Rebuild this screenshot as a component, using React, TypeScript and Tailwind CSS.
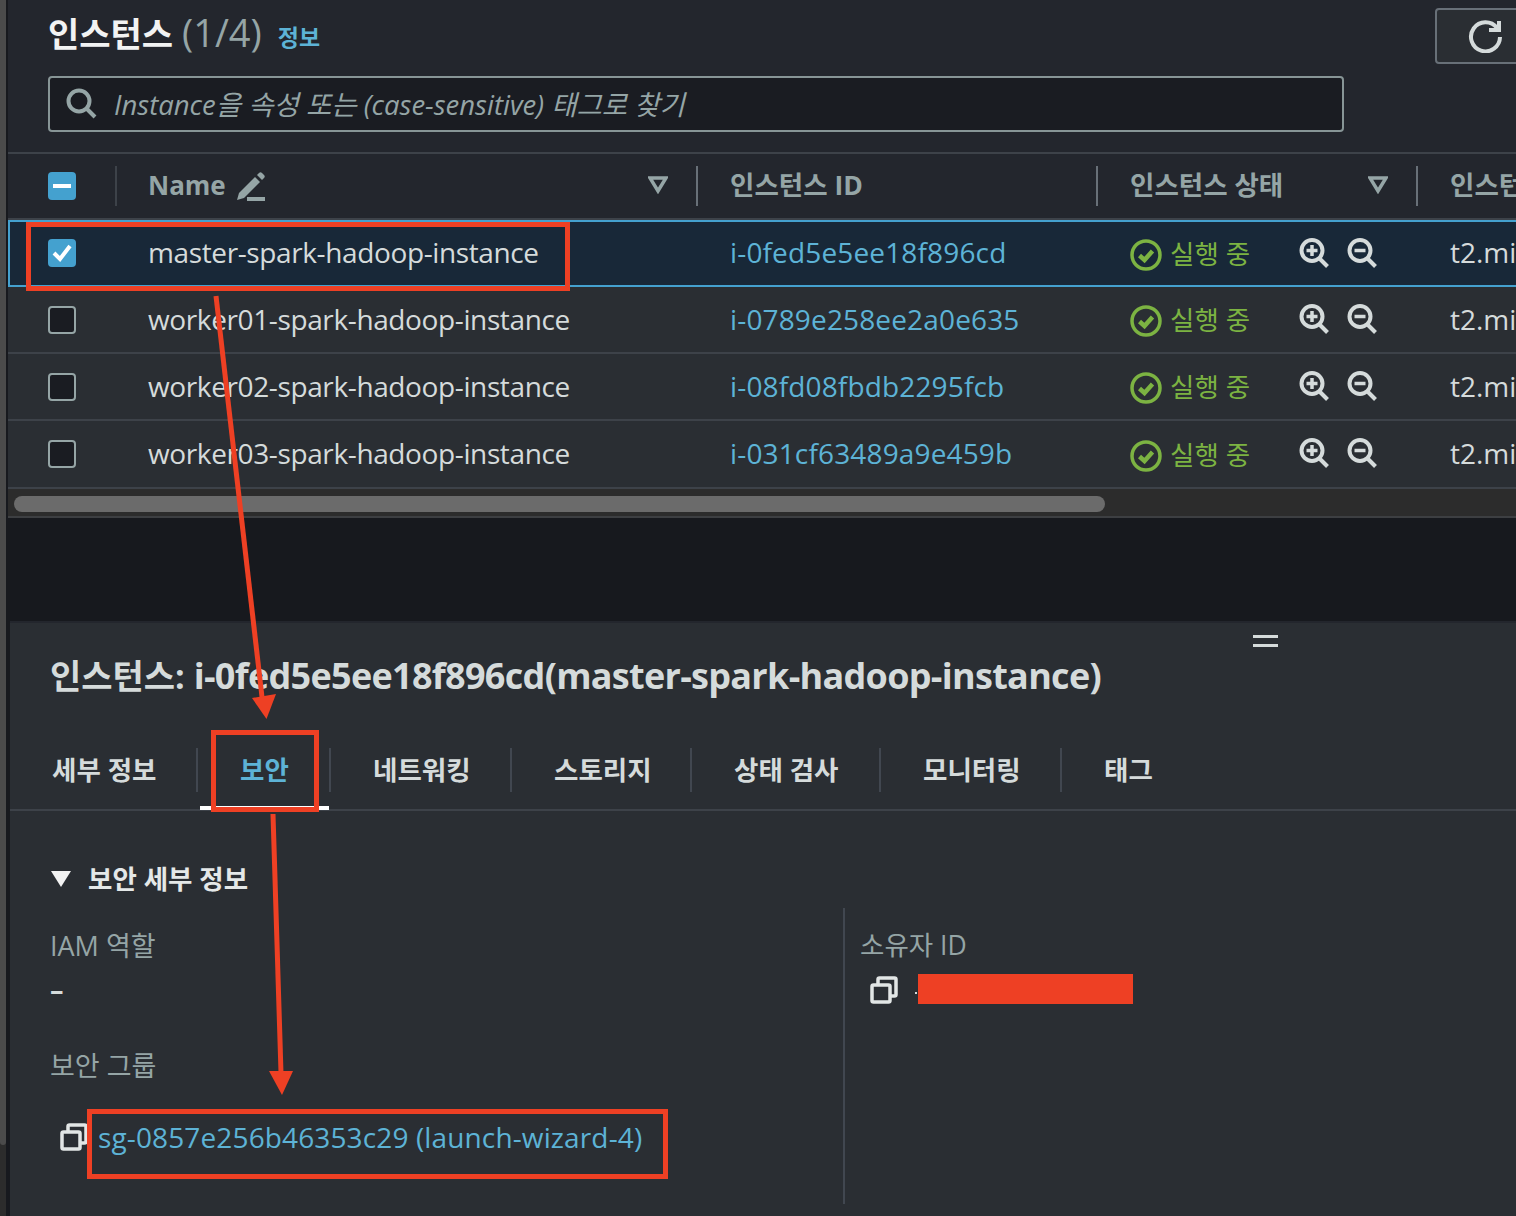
import React from 'react'

const rows = [
  { name: 'master-spark-hadoop-instance', id: 'i-0fed5e5ee18f896cd', selected: true },
  { name: 'worker01-spark-hadoop-instance', id: 'i-0789e258ee2a0e635', selected: false },
  { name: 'worker02-spark-hadoop-instance', id: 'i-08fd08fbdb2295fcb', selected: false },
  { name: 'worker03-spark-hadoop-instance', id: 'i-031cf63489a9e459b', selected: false, last: true },
]

const tabs = [
  { label: '세부 정보', width: 'w-[188px]' },
  { label: '보안', width: 'w-[133px]', active: true },
  { label: '네트워킹', width: 'w-[181px]' },
  { label: '스토리지', width: 'w-[180px]' },
  { label: '상태 검사', width: 'w-[189px]' },
  { label: '모니터링', width: 'w-[181px]' },
  { label: '태그', width: 'w-[120px]', last: true },
]

function Zoom({ minus }: { minus?: boolean }) {
  return (
    <svg width="30" height="30" viewBox="0 0 30 30" fill="none" stroke="#d5dbdb" strokeWidth="4">
      <circle cx="13" cy="12.5" r="10.500" />
      <path d="M21 21l7.500 7.500" />
      <path d="M7.500 12.500h11" strokeWidth="3.500" />
      {!minus && <path d="M13 7v11" strokeWidth="3.500" />}
    </svg>
  )
}

function CopyIcon() {
  return (
    <svg width="28" height="28" viewBox="0 0 28 28" fill="none" stroke="#e2e6e6" strokeWidth="3.500" strokeLinejoin="round">
      <rect x="2" y="9" width="18" height="17" rx="1.500" />
      <path d="M8 9V3.500C8 2.600 8.600 2 9.500 2h15c.9 0 1.500.6 1.500 1.500v15c0 .9-.6 1.500-1.500 1.500H20" />
    </svg>
  )
}

function Row({ name, id, selected, last }: { name: string; id: string; selected: boolean; last?: boolean }) {
  return (
    <div
      className={
        selected
          ? 'flex h-[67px] items-center border-y-2 border-l-2 border-[#44a1cf] bg-[#182838] text-[#d5dbdb]'
          : `flex ${last ? 'h-[68px]' : 'h-[67px]'} items-center border-b-2 border-[#3d4249] text-[#d5dbdb]`
      }
    >
      <div className={selected ? 'w-[138px] shrink-0 pl-[38px]' : 'w-[140px] shrink-0 pl-[40px]'}>
        {selected ? (
          <div className="-mt-[1px] flex h-7 w-7 items-center justify-center rounded-[4px] bg-[#44a1cf]">
            <svg width="20" height="18" viewBox="0 0 20 18" fill="none" stroke="#fff" strokeWidth="4">
              <path d="M2 9l6 6L18 2" />
            </svg>
          </div>
        ) : (
          <div className="h-7 w-7 rounded-[4px] border-2 border-[#95a5a6] bg-[#1a1c22]" />
        )}
      </div>
      <div className={`${selected ? '-mt-[4px]' : '-mt-[2px]'} w-[582px] shrink-0 text-[28px] leading-none tracking-[-0.38px]`}>{name}</div>
      <div className={`${selected ? '-mt-[4px]' : '-mt-[2px]'} w-[400px] shrink-0 text-[28px] leading-none tracking-[0.15px] text-[#5db3d6]`}>{id}</div>
      <div className="flex w-[320px] shrink-0 items-center">
        <svg width="32" height="32" viewBox="0 0 32 32" fill="none" stroke="#7cb342" strokeWidth="3.500" className="mt-[3px]">
          <circle cx="16" cy="16" r="14" />
          <path d="M9.500 16.500l5 4.500 8-9" strokeWidth="4.500" />
        </svg>
        <span className={`${selected ? 'mt-[1px]' : 'mt-[2px]'} ml-2 w-[129px] text-[26.500px] leading-none font-normal text-[#7cb342]`}>실행 중</span>
        <div className="-mt-[2px] flex w-[90px] gap-[18px]">
          <Zoom />
          <Zoom minus />
        </div>
      </div>
      <div className={`${selected ? '-mt-[4px]' : '-mt-[2px]'} text-[28px] leading-none whitespace-nowrap`}>t2.micro</div>
    </div>
  )
}

export default function App() {
  return (
    <div className="relative flex h-[1216px] w-[1516px] overflow-hidden bg-[#17191e] font-['Open_Sans','Noto_Sans_CJK_KR',sans-serif]">
      {/* window scrollbar on the left edge */}
      <div className="h-full w-[6px] shrink-0 bg-[#2c2c2c]">
        <div className="h-[1145px] rounded-b-[3px] bg-[#4b4b4b]" />
      </div>
      <div className="h-full w-[2px] shrink-0 bg-[#17191e]" />

      <div className="flex min-w-0 flex-1 flex-col">
        {/* instance list */}
        <div className="h-[518px] shrink-0 overflow-hidden border-b-2 border-[#3d3f42] bg-[#23262d]">
          <div className="flex h-[76px] items-start pl-[40px]">
            <h1 className="mt-[9px] text-[34px] leading-[46px] font-bold whitespace-nowrap text-[#f2f3f3]">
              인스턴스 <span className="text-[38px] font-normal text-[#95a5a6]">(1/4)</span>
            </h1>
            <span className="mt-[22px] ml-4 text-[23px] leading-[30px] font-bold text-[#5db3d6]">정보</span>
            <div className="mt-[8px] ml-auto flex h-[56px] w-[90px] translate-x-[9px] items-center rounded-[4px] border-2 border-[#687078] bg-[#2a2e33] pl-[31px]">
              <svg width="34" height="34" viewBox="0 0 34 34" fill="none" stroke="#d5dbdb" strokeWidth="4">
                <path d="M29 9a14.500 14.500 0 1 0 3 9" />
                <path d="M31 2v9H21" />
              </svg>
            </div>
          </div>

          <div className="ml-[40px] flex h-[56px] w-[1296px] items-center rounded-[4px] border-2 border-[#879596] bg-[#1a1c22] pl-[16px]">
            <svg width="32" height="32" viewBox="0 0 32 32" fill="none" stroke="#95a5a6" strokeWidth="4">
              <circle cx="13" cy="13" r="10.500" />
              <path d="M20.500 20.500L29 29" />
            </svg>
            <span className="mt-[2px] ml-[16px] text-[27.500px] leading-none text-[#95a5a6] italic">
              Instance을 속성 또는 (case-sensitive) 태그로 찾기
            </span>
          </div>

          <div className="mt-[20px] flex h-[68px] items-center border-y-2 border-[#3d4249] pb-[2px] text-[26.500px] leading-none font-bold text-[#95a5a6]">
            <div className="mt-[2px] flex w-[140px] shrink-0 items-center pl-[40px]">
              <div className="flex h-7 w-7 items-center justify-center rounded-[4px] bg-[#44a1cf]">
                <div className="h-1 w-[18px] bg-white" />
              </div>
              <div className="ml-[39px] h-10 w-[2px] bg-[#3d4249]" />
            </div>
            <div className="relative flex w-[582px] shrink-0 items-center text-[26px]">
              Name
              <svg width="30" height="30" viewBox="0 0 30 30" fill="#95a5a6" className="mt-[2px] ml-[10px]">
                <path d="M1 29l2-7L19 6l5 5L8 27z" />
                <path d="M21 4l2-2c1-1 2-1 3 0l2 2c1 1 1 2 0 3l-2 2z" />
                <path d="M11 26h18v4H11z" />
              </svg>
              <svg width="20" height="18" viewBox="0 0 20 18" fill="none" stroke="#95a5a6" strokeWidth="3.500" className="absolute left-[500px]">
                <path d="M2 2h16l-8 13z" />
              </svg>
              <div className="absolute left-[548px] mt-[2px] h-10 w-[2px] bg-[#687078]" />
            </div>
            <div className="relative flex w-[400px] shrink-0 items-center">
              인스턴스 ID
              <div className="absolute left-[366px] mt-[2px] h-10 w-[2px] bg-[#687078]" />
            </div>
            <div className="relative flex w-[320px] shrink-0 items-center">
              인스턴스 상태
              <svg width="20" height="18" viewBox="0 0 20 18" fill="none" stroke="#95a5a6" strokeWidth="3.500" className="absolute left-[238px]">
                <path d="M2 2h16l-8 13z" />
              </svg>
              <div className="absolute left-[286px] mt-[2px] h-10 w-[2px] bg-[#687078]" />
            </div>
            <div className="whitespace-nowrap">인스턴스 유형</div>
          </div>

          <div className="bg-[#2a2e33]">
            {rows.map((row) => (
              <Row key={row.id} {...row} />
            ))}
            <div className="flex h-[27px] items-center bg-[#2c2c2c] pt-[3px] pl-[6px]">
              <div className="h-4 w-[1091px] rounded-full bg-[#6b6b6b]" />
            </div>
          </div>
        </div>

        <div className="h-[103px] shrink-0 bg-[#17191e]" />

        {/* detail panel */}
        <div className="ml-[2px] flex-1 border-t-2 border-[#23262d] bg-[#2a2e33]">
          <div className="flex h-[17px] justify-end pr-[238px]">
            <div className="mt-[12px] flex h-[12px] w-[25px] flex-col justify-between">
              <div className="h-[3px] bg-[#d5dbdb]" />
              <div className="h-[3px] bg-[#d5dbdb]" />
            </div>
          </div>
          <h2 className="mt-[13px] pl-[40px] text-[34px] leading-[46px] font-bold whitespace-nowrap text-[#d5dbdb]">
            인스턴스: <span className="text-[36px] tracking-[-0.7px]">i-0fed5e5ee18f896cd(master-spark-hadoop-instance)</span>
          </h2>

          <div className="mt-[49px] flex h-[63px] items-start border-b-2 border-[#3d4249]">
            {tabs.map((tab) =>
              tab.active ? (
                <div key={tab.label} className={`relative flex h-[63px] ${tab.width} shrink-0 items-start justify-center`}>
                  <span className="text-[26.500px] leading-[44px] font-bold whitespace-nowrap text-[#5db3d6]">{tab.label}</span>
                  <div className="absolute right-[2px] bottom-[1px] left-[2px] h-1 bg-white" />
                  <div className="absolute top-0 right-0 h-[44px] w-[2px] bg-[#414750]" />
                </div>
              ) : (
                <div
                  key={tab.label}
                  className={`flex h-[44px] ${tab.width} shrink-0 items-start pl-[42px] ${tab.last ? '' : 'border-r-2 border-[#414750]'}`}
                >
                  <span className="text-[26.500px] leading-[44px] font-bold whitespace-nowrap text-[#d5dbdb]">{tab.label}</span>
                </div>
              ),
            )}
          </div>

          <div className="flex pt-[48px] pl-[40px]">
            <div className="w-[793px] shrink-0">
              <div className="flex items-center">
                <svg width="22" height="18" viewBox="0 0 22 18" fill="#f2f3f3">
                  <path d="M1 1h20L11 17z" />
                </svg>
                <span className="ml-[16px] text-[26.500px] leading-[40px] font-bold text-[#e4e8e8]">보안 세부 정보</span>
              </div>
              <div className="mt-[27px] text-[27px] leading-[40px] text-[#95a5a6]">IAM 역할</div>
              <div className="mt-[4px] text-[27px] leading-[40px] font-bold text-[#d5dbdb]">–</div>
              <div className="mt-[36px] text-[27px] leading-[40px] text-[#95a5a6]">보안 그룹</div>
              <div className="mt-[31px] flex items-center pl-[10px]">
                <CopyIcon />
                <a className="ml-[10px] text-[28px] leading-[40px] tracking-[0.13px] whitespace-nowrap text-[#5db3d6]">
                  sg-0857e256b46353c29 (launch-wizard-4)
                </a>
              </div>
            </div>
            <div className="mt-[49px] h-[296px] border-l-2 border-[#414750] pl-[15px]">
              <div className="mt-[17px] text-[26.500px] leading-[40px] text-[#95a5a6]">소유자 ID</div>
              <div className="mt-[11px] flex items-center pl-[10px]">
                <CopyIcon />
                <div className="mt-[6px] ml-[17px] h-[2px] w-[2px] bg-[#d5dbdb]" />
              </div>
            </div>
          </div>
        </div>
      </div>

      {/* red annotations drawn over the screenshot */}
      <div className="absolute top-[222px] left-[26px] h-[69px] w-[544px] border-[5px] border-[#ee4024]" />
      <div className="absolute top-[730px] left-[211px] h-[82px] w-[108px] border-[5px] border-[#ee4024]" />
      <div className="absolute top-[1109px] left-[87px] h-[70px] w-[581px] border-[5px] border-[#ee4024]" />
      <div className="absolute top-[974px] left-[918px] h-[30px] w-[215px] bg-[#ee4024]" />
      <svg width="1516" height="1216" className="pointer-events-none absolute top-0 left-0" fill="#ee4024" stroke="none">
        <path d="M216 296L262 697" stroke="#ee4024" strokeWidth="5" />
        <path d="M252 698L276 694L266.500 719z" />
        <path d="M273 814L281 1073" stroke="#ee4024" strokeWidth="5" />
        <path d="M269 1071H293L282 1095z" />
      </svg>
    </div>
  )
}
